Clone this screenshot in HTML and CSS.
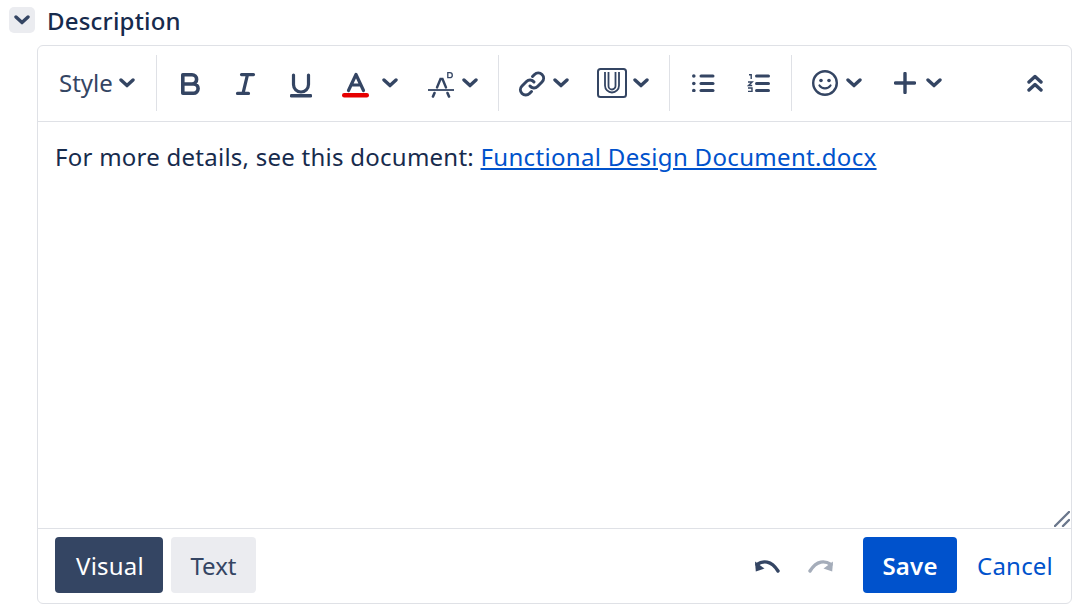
FILE: index.html
```html
<!DOCTYPE html>
<html lang="en">
<head>
<meta charset="utf-8">
<title>Description</title>
<link rel="stylesheet" href="styles.css">
</head>
<body>
<svg class="defs" width="0" height="0" aria-hidden="true"><defs>
<symbol id="chev" viewBox="0 0 16 10"><path d="M2 2l6 5.600L14 2" fill="none" stroke="currentColor" stroke-width="3.400" stroke-linecap="round" stroke-linejoin="round"/></symbol>
</defs></svg>
<div class="heading">
  <button class="toggle"><svg class="chev" viewBox="0 0 16 10"><use href="#chev"/></svg></button>
  <h2 class="title">Description</h2>
</div>
<section class="editor">
  <div class="toolbar">
    <div class="group group-style">
      <span class="style-label">Style</span>
      <svg class="chev" viewBox="0 0 16 10"><use href="#chev"/></svg>
    </div>
    <div class="group group-format">
      <svg class="ic" viewBox="0 0 24 26"><path d="M4.800 4.800h9.200a4.600 4.600 0 0 1 0 9.200H4.800zM4.800 14h10.700a4.600 4.600 0 0 1 0 9.200H4.800z" fill="none" stroke="currentColor" stroke-width="3.600" stroke-linejoin="round"/></svg>
      <svg class="ic" viewBox="0 0 24 26"><path d="M8.500 4.600h12M4.500 23.400h11M14.500 4.600L10 23.400" fill="none" stroke="currentColor" stroke-width="3.200" stroke-linecap="round"/></svg>
      <svg class="ic ic-u" viewBox="0 0 24 28"><path d="M4.500 5v9.500a7.500 7.500 0 0 0 15 0V5" fill="none" stroke="currentColor" stroke-width="3.200" stroke-linecap="round"/><rect x="1" y="24" width="22" height="3.400" rx="1.200" fill="currentColor"/></svg>
      <span class="drop drop-color">
        <svg class="ic-wide" viewBox="0 0 28 30"><path d="M7.500 22.500L15 6.500l7.500 16M10.500 17h9" fill="none" stroke="currentColor" stroke-width="3.200" stroke-linecap="round" stroke-linejoin="round"/><rect x="1" y="25" width="27" height="4.500" rx="2.200" fill="#e60000"/></svg>
        <svg class="chev" viewBox="0 0 16 10"><use href="#chev"/></svg>
      </span>
      <span class="drop drop-strike">
        <svg class="ic-wide" viewBox="0 0 28 30"><path d="M10 19.500L13.500 11h2l3.500 8.500" fill="none" stroke="currentColor" stroke-width="2.400" stroke-linecap="round"/><path d="M1 22h26" stroke="currentColor" stroke-width="1.800"/><path d="M6 28.500l1.500-3.500M22 28.500L20.500 25" stroke="currentColor" stroke-width="2.600" stroke-linecap="round"/><path d="M20.800 4.700h2a2.400 2.400 0 0 1 0 5h-2z" fill="none" stroke="currentColor" stroke-width="1.300"/></svg>
        <svg class="chev" viewBox="0 0 16 10"><use href="#chev"/></svg>
      </span>
    </div>
    <div class="group group-insert">
      <span class="drop drop-link">
        <svg class="ic-wide" viewBox="0 0 28 30"><path d="M12 18a5 5 0 0 0 7.500 .500l4.500-4.500a5.300 5.300 0 0 0-7.500-7.500l-2 2M16 14a5 5 0 0 0-7.500-.5l-4.500 4.500a5.300 5.300 0 0 0 7.500 7.500l2-2" fill="none" stroke="currentColor" stroke-width="3" stroke-linecap="round"/></svg>
        <svg class="chev" viewBox="0 0 16 10"><use href="#chev"/></svg>
      </span>
      <span class="drop drop-attach">
        <svg class="ic-attach" viewBox="0 0 30 30"><rect x="1" y="1" width="28" height="28" rx="2.500" fill="none" stroke="currentColor" stroke-width="2"/><path d="M8 4v13.500a7 7 0 0 0 14 0V4M11.500 4v14a3.500 3.500 0 0 0 7 0V4" fill="none" stroke="currentColor" stroke-width="1.800"/></svg>
        <svg class="chev" viewBox="0 0 16 10"><use href="#chev"/></svg>
      </span>
    </div>
    <div class="group group-list">
      <svg class="ic-list" viewBox="0 0 24 18"><g fill="currentColor"><circle cx="2.800" cy="2" r="1.800"/><circle cx="2.800" cy="9.500" r="1.800"/><circle cx="2.800" cy="16.500" r="1.800"/><rect x="8.500" y="0.500" width="15" height="3" rx="1.500"/><rect x="8.500" y="8" width="15" height="3" rx="1.500"/><rect x="8.500" y="15" width="15" height="3" rx="1.500"/></g></svg>
      <svg class="ic-list" viewBox="0 0 24 18"><g fill="none" stroke="currentColor" stroke-width="1.400"><path d="M2 .8h2.200v4.200M1 8h4.200L1.500 11.500h3.700M1 14h4v3.500H1"/></g><g fill="currentColor"><rect x="8" y="0.500" width="15" height="3" rx="1.500"/><rect x="8" y="8" width="15" height="3" rx="1.500"/><rect x="8" y="15" width="15" height="3" rx="1.500"/></g></svg>
    </div>
    <div class="group group-extra">
      <span class="drop drop-smile">
        <svg class="ic-smile" viewBox="0 0 26 26"><circle cx="13" cy="13" r="11.800" fill="none" stroke="currentColor" stroke-width="2.400"/><circle cx="9" cy="10.500" r="1.800" fill="currentColor"/><circle cx="17" cy="10.500" r="1.800" fill="currentColor"/><path d="M7.500 15.500c2.500 3.800 8.500 3.800 11 0" fill="none" stroke="currentColor" stroke-width="2.200" stroke-linecap="round"/></svg>
        <svg class="chev" viewBox="0 0 16 10"><use href="#chev"/></svg>
      </span>
      <span class="drop drop-plus">
        <svg class="ic-plus" viewBox="0 0 22 22"><path d="M1.500 11h19M11 1.500v19" stroke="currentColor" stroke-width="3.400" stroke-linecap="round"/></svg>
        <svg class="chev" viewBox="0 0 16 10"><use href="#chev"/></svg>
      </span>
      <svg class="collapse" viewBox="0 0 16 18"><path d="M2 8l6-5.500L14 8M2 16l6-5.500L14 16" fill="none" stroke="currentColor" stroke-width="3.400" stroke-linecap="round" stroke-linejoin="round"/></svg>
    </div>
  </div>
  <div class="content">
    <p class="para">For more details, see this document: <a class="link" href="#">Functional Design Document.docx</a></p>
    <svg class="resize" viewBox="0 0 16 16"><path d="M1 15L15 1M9 15l6-6" stroke="#6b778c" stroke-width="2.400" stroke-linecap="round"/></svg>
  </div>
  <div class="footer">
    <button class="btn btn-visual">Visual</button>
    <button class="btn btn-text">Text</button>
    <div class="actions">
      <svg class="undo" viewBox="0 0 26 13"><path d="M3 4.500c6-4 14-4.500 21 6.500" fill="none" stroke="currentColor" stroke-width="3.400" stroke-linecap="round"/><path d="M1 1.500l.8 10 8.700-3z" fill="currentColor"/></svg>
      <svg class="redo" viewBox="0 0 26 13"><path d="M23 4.500c-6-4-14-4.500-21 6.500" fill="none" stroke="currentColor" stroke-width="3.400" stroke-linecap="round"/><path d="M25 1.500l-.8 10-8.700-3z" fill="currentColor"/></svg>
      <button class="btn btn-save">Save</button>
      <a class="cancel" href="#">Cancel</a>
    </div>
  </div>
</section>
</body>
</html>
```
FILE: styles.css
```css
* { box-sizing: border-box; }
html, body { height: 100%; }
body {
  margin: 0;
  padding: 7px 13px 0 9px;
  background: #fff;
  color: #172b4d;
  font-family: "Noto Sans", "Open Sans", sans-serif;
  overflow: hidden;
}
.defs { position: absolute; }
svg { display: block; flex: none; }
.heading { display: flex; align-items: center; gap: 12px; height: 26px; }
.toggle {
  width: 26px; height: 26px; padding: 0; border: 0; border-radius: 5px;
  background: #ebecf0; color: #344563;
  display: flex; align-items: center; justify-content: center;
}
.title { margin: 0; padding-top: 2px; font-size: 24px; font-weight: 500; line-height: 28px; letter-spacing: .2px; }
.editor {
  margin: 12px 0 0 28px;
  height: 559px;
  border: 1px solid #dfe1e6;
  border-radius: 6px;
  display: flex; flex-direction: column;
}
.toolbar {
  height: 76px; flex: none;
  padding: 9px 0 10px;
  border-bottom: 1px solid #dfe1e6;
  display: flex; align-items: stretch;
  color: #344563;
}
.group { display: flex; align-items: center; border-right: 1px solid #dfe1e6; }
.chev { width: 16px; height: 10px; }
.ic { width: 24px; height: 26px; }
.ic-wide { width: 28px; height: 30px; }
.ic-attach { width: 30px; height: 30px; }
.ic-plus { width: 22px; height: 22px; }
.ic-smile { width: 26px; height: 26px; }
.ic-list { width: 24px; height: 18px; }
.ic-u { height: 28px; margin-left: 1px; margin-top: 2px; }
.drop { display: flex; align-items: center; gap: 6px; }
.group-style { width: 119px; padding-left: 21px; gap: 6px; font-size: 24px; }
.style-label { line-height: 30px; }
.group-format { width: 342px; padding-left: 21px; gap: 31px; }
.drop-color { margin-left: -3px; gap: 13px; margin-right: -2px; }
.drop-strike { gap: 7px; }
.group-insert { width: 171px; padding-left: 19px; gap: 28px; }
.drop-link { gap: 7px; }
.group-list { width: 122px; padding-left: 21px; gap: 32px; }
.group-extra { flex: 1; padding-left: 20px; gap: 32px; border-right: 0; }
.drop-smile { gap: 8px; }
.drop-plus { gap: 10px; }
.collapse { width: 16px; height: 18px; margin-left: auto; margin-right: 28px; }
.content { flex: 1; position: relative; padding: 17px 17px 0; }
.para { margin: 0; font-size: 24px; line-height: 36px; letter-spacing: .25px; }
.link { color: #0052cc; letter-spacing: .32px; }
.resize { position: absolute; right: 1px; bottom: 1px; width: 16px; height: 16px; }
.footer {
  height: 75px; flex: none;
  border-top: 1px solid #dfe1e6;
  padding: 8px 18px 10px 17px;
  display: flex; align-items: stretch; gap: 8px;
}
.btn {
  border: 0; border-radius: 4px; padding: 0;
  font: inherit; font-size: 24px; letter-spacing: .2px;
}
.btn-visual { width: 108px; padding-left: 2px; background: #344563; color: #fff; }
.btn-text { width: 85px; background: #ebecf0; color: #344563; letter-spacing: 0; }
.actions { margin-left: auto; display: flex; align-items: center; }
.undo, .redo { width: 26px; height: 13px; margin-top: 3px; }
.undo { color: #344563; margin-right: 28px; }
.redo { color: #a5adba; margin-right: 29px; }
.btn-save { width: 94px; height: 56px; background: #0052cc; color: #fff; font-weight: 600; }
.cancel { margin-left: 20px; color: #0052cc; text-decoration: none; font-size: 24px; letter-spacing: .2px; }
```
